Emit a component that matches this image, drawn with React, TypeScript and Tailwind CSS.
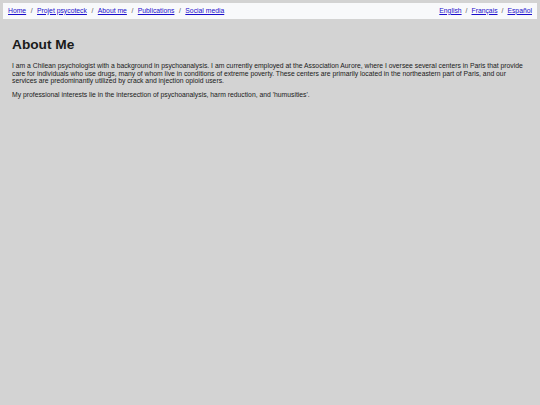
const nav = ['Home', 'Projet psycoteck', 'About me', 'Publications', 'Social media'];
const langs = ['English', 'Français', 'Español'];

function Links({ items, gap }: { items: string[]; gap: string }) {
  return (
    <div className="flex items-center">
      {items.map((item, i) => (
        <span key={item} className="flex items-center">
          {i > 0 && <span className={`${gap} text-[#555]`}>/</span>}
          <a href="#" className="text-[#1a0dcc] underline">
            {item}
          </a>
        </span>
      ))}
    </div>
  );
}

export default function App() {
  return (
    <div className="min-h-[405px] bg-[#d3d3d3] p-[3px] font-['Liberation_Sans',Arial,sans-serif] text-[#1a1a1a]">
      <nav className="flex h-[16px] items-center justify-between bg-[#f8f9fb] px-[5px] text-[6.8px] leading-none">
        <Links items={nav} gap="mx-[4.5px]" />
        <Links items={langs} gap="mx-[4px]" />
      </nav>
      <main className="px-[9px] pt-[17px]">
        <h1 className="text-[13.7px] font-bold leading-[17px]">About Me</h1>
        <p className="mt-[9px] text-[6.8px] leading-[7.5px]">
          I am a Chilean psychologist with a background in psychoanalysis. I am currently employed at the Association
          Aurore, where I oversee several centers in Paris that provide care for individuals who use drugs, many of whom
          live in conditions of extreme poverty. These centers are primarily located in the northeastern part of Paris,
          and our services are predominantly utilized by crack and injection opioid users.
        </p>
        <p className="mt-[6.5px] text-[6.8px] leading-[7.5px]">
          My professional interests lie in the intersection of psychoanalysis, harm reduction, and 'humusities'.
        </p>
      </main>
    </div>
  );
}
